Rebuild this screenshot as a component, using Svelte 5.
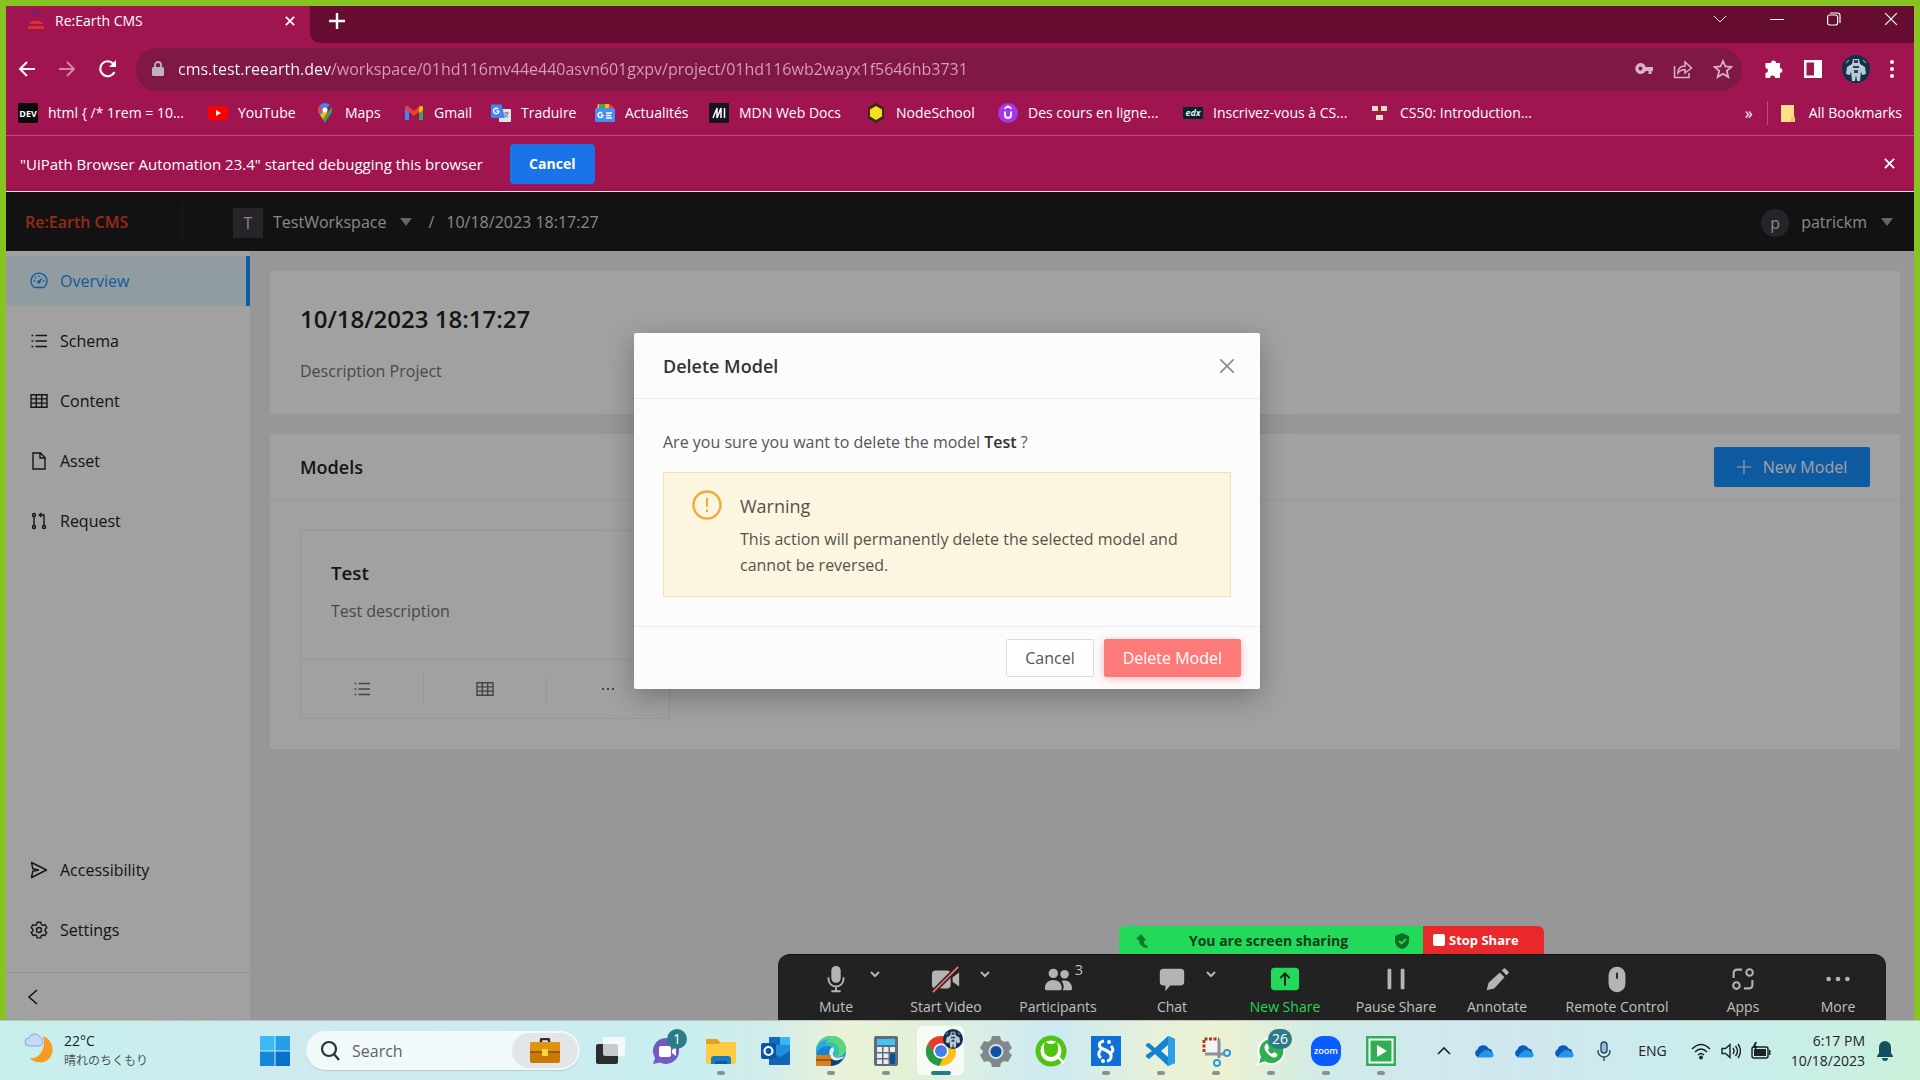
<script>
  const bookmarks = [
    { icon: 'dev', label: 'html { /* 1rem = 10...' },
    { icon: 'youtube', label: 'YouTube' },
    { icon: 'maps', label: 'Maps' },
    { icon: 'gmail', label: 'Gmail' },
    { icon: 'translate', label: 'Traduire' },
    { icon: 'news', label: 'Actualités' },
    { icon: 'mdn', label: 'MDN Web Docs' },
    { icon: 'node', label: 'NodeSchool' },
    { icon: 'udemy', label: 'Des cours en ligne...' },
    { icon: 'edx', label: 'Inscrivez-vous à CS...' },
    { icon: 'cs50', label: 'CS50: Introduction...' }
  ];

  const mainNav = [
    { icon: 'gauge', label: 'Overview', active: true },
    { icon: 'list', label: 'Schema' },
    { icon: 'table', label: 'Content' },
    { icon: 'file', label: 'Asset' },
    { icon: 'request', label: 'Request' }
  ];
  const lowerNav = [
    { icon: 'send', label: 'Accessibility' },
    { icon: 'gear', label: 'Settings' }
  ];

  const meeting = [
    { icon: 'mic', label: 'Mute', menu: true },
    { icon: 'video', label: 'Start Video', menu: true },
    { icon: 'people', label: 'Participants', count: 3 },
    { icon: 'chat', label: 'Chat', menu: true },
    { icon: 'share', label: 'New Share', accent: true },
    { icon: 'pause', label: 'Pause Share' },
    { icon: 'pencil', label: 'Annotate' },
    { icon: 'mouse', label: 'Remote Control' },
    { icon: 'apps', label: 'Apps' },
    { icon: 'more', label: 'More' }
  ];

  const taskApps = [
    { icon: 'taskview', label: 'Task view' },
    { icon: 'teams', label: 'Chat', badge: '1' },
    { icon: 'explorer', label: 'File Explorer', running: true },
    { icon: 'outlook', label: 'Outlook' },
    { icon: 'edge', label: 'Edge', running: true },
    { icon: 'calc', label: 'Calculator', running: true },
    { icon: 'chrome', label: 'Chrome', active: true },
    { icon: 'settings', label: 'Settings' },
    { icon: 'qtest', label: 'Inspector' },
    { icon: 'studio', label: 'Studio', running: true },
    { icon: 'vscode', label: 'Visual Studio Code', running: true },
    { icon: 'snip', label: 'Snipping Tool', running: true },
    { icon: 'whatsapp', label: 'WhatsApp', badge: '26', running: true },
    { icon: 'zoom', label: 'Zoom', running: true },
    { icon: 'assistant', label: 'Assistant', running: true }
  ];

  let url = $state('cms.test.reearth.dev/workspace/01hd116mv44e440asvn601gxpv/project/01hd116wb2wayx1f5646hb3731');
</script>

{#snippet line(name)}
  <svg class="ic" viewBox="0 0 18 18" fill="none" stroke="currentColor" stroke-width="1.4" aria-hidden="true">
    {#if name === 'gauge'}
      <path d="M4.2 15.5A8 8 0 1 1 13.8 15.5Z" stroke-linejoin="round" />
      <path d="M8.6 10.2 12 6.4M9 3.4v1.6M3.6 9h1.6M12.8 9h1.6M5 5.2l1 1" />
      <circle cx="8.8" cy="10" r="1" />
    {:else if name === 'list'}
      <path d="M5.5 3.5H17M5.5 9H17M5.5 14.5H17M1.5 3.5h1.8M1.5 9h1.8M1.5 14.5h1.8" />
    {:else if name === 'table'}
      <path d="M1 2.7h16v12.6H1zM1 6.9h16M1 11.1h16M6.3 2.7v12.6M11.7 2.7v12.6" />
    {:else if name === 'file'}
      <path d="M3 1h7.5L15 5.5V17H3zM10 1v5h5" />
    {:else if name === 'request'}
      <circle cx="4" cy="3" r="1.5" /><circle cx="4" cy="15" r="1.5" /><circle cx="14" cy="15" r="1.5" />
      <path d="M4 4.5v9M14 13.5V3H9.5M11.5 1 9.3 3l2.2 2" />
    {:else if name === 'send'}
      <path d="M1.5 1.5 16.5 9l-15 7.500L2.800 10.200 8.500 9 2.800 7.800Z" stroke-linejoin="round" />
    {:else if name === 'gear'}
      <path d="M7.200 1.200h3.600l.5 2.200 1.500.9 2.200-.7 1.800 3.100-1.700 1.500v1.700l1.700 1.500-1.800 3.100-2.200-.7-1.500.9-.5 2.200H7.200l-.5-2.200-1.500-.9-2.200.7-1.800-3.100 1.700-1.500V8.200L1.200 6.700 3 3.600l2.200.7 1.500-.9Z" stroke-linejoin="round" />
      <circle cx="9" cy="9" r="2.500" />
    {:else if name === 'dots'}
      <path d="M3 9h2M8 9h2M13 9h2" stroke-width="1.8" />
    {/if}
  </svg>
{/snippet}

{#snippet cross(size, width)}
  <svg width={size} height={size} viewBox="0 0 12 12" stroke="currentColor" stroke-width={width} fill="none" aria-hidden="true"><path d="M1 1l10 10M11 1 1 11" /></svg>
{/snippet}

{#snippet favicon(name)}
  <svg class="fav" viewBox="0 0 20 20" aria-hidden="true">
    {#if name === 'dev'}
      <rect width="20" height="20" rx="2" fill="#0a0a0a" /><text x="10" y="14" text-anchor="middle" font-size="9" font-weight="700" fill="#fff">DEV</text>
    {:else if name === 'youtube'}
      <rect y="3" width="20" height="14" rx="4" fill="#f00" /><path d="M8 7v6l5-3z" fill="#fff" />
    {:else if name === 'maps'}
      <path d="M10 0a7 7 0 0 0-7 7c0 2 1 3.500 2 5l10-10A7 7 0 0 0 10 0Z" fill="#4285f4" />
      <path d="M4.500 2.700 8 6 3.600 10A7 7 0 0 1 4.500 2.700Z" fill="#ea4335" />
      <path d="m5 12 4-4 3.500 1.500L8 16.500Z" fill="#fbbc04" />
      <path d="M15.500 2.700A7 7 0 0 1 15 12c-2 3-4 5-5 8-.6-1.300-1.200-2.400-2-3.500L16 5Z" fill="#34a853" />
      <circle cx="10" cy="7" r="2.500" fill="#fff" />
    {:else if name === 'gmail'}
      <path d="M1 5v12h4V8.500Z" fill="#4285f4" /><path d="M19 5v12h-4V8.500Z" fill="#34a853" />
      <path d="M1 5c0-2 2-2.500 3.500-1.500L10 8l5.500-4.500C17 2.500 19 3 19 5l-9 8Z" fill="#ea4335" />
      <path d="m15 4 .5-.5C17 2.500 19 3 19 5v2l-4 3Z" fill="#fbbc04" />
    {:else if name === 'translate'}
      <rect x="8" y="6" width="12" height="13" rx="1" fill="#e4e4e6" /><path d="M0 1.500h10.500L14 15H1.500A1.500 1.500 0 0 1 0 13.500Z" fill="#4285f4" />
      <path d="M8 8H5.500M8 8a2.700 2.700 0 1 1-.8-2" stroke="#fff" stroke-width="1.400" fill="none" />
      <path d="M13 10h5M15.500 9v1M17 10c-.5 2-2 3.500-3 4M14 11c.5 1.500 2 3 3 3.500" stroke="#6b7280" fill="none" />
    {:else if name === 'news'}
      <path d="M3 1h11l3 4H2z" fill="#fbbc04" /><path d="M4 1h6v4H4z" fill="#34a853" /><path d="M14 2l4 1v4h-4z" fill="#ea4335" />
      <rect x="0" y="5" width="20" height="14" rx="1.500" fill="#4a8df6" />
      <path d="M8 12H6M8 12a2.500 2.500 0 1 1-.8-1.800M11 10h6M11 12.500h5M11 15h6" stroke="#fff" stroke-width="1.500" fill="none" />
    {:else if name === 'mdn'}
      <rect width="20" height="20" rx="1" fill="#15141a" /><path d="m4 15 4-10v10l4-10v10M15.500 5v10" stroke="#fff" stroke-width="1.500" fill="none" />
    {:else if name === 'node'}
      <path d="m10 0 8 4.500v11L10 20l-8-4.500v-11Z" fill="#3a2a12" /><path d="m10 3 6 3.500v7L10 17l-6-3.500v-7Z" fill="#f7df1e" />
    {:else if name === 'udemy'}
      <circle cx="10" cy="10" r="10" fill="#a435f0" /><path d="M6.500 5.500 10 3.500l3.500 2M7 8.500V12a3 3 0 0 0 6 0V8.500" stroke="#fff" stroke-width="2" fill="none" />
    {:else if name === 'edx'}
      <rect x="0" y="4" width="20" height="12" rx="1" fill="#02262b" /><text x="10" y="13" text-anchor="middle" font-size="9" font-weight="700" font-style="italic" fill="#e8f0ef">edx</text>
    {:else if name === 'cs50'}
      <path d="M5 6h10M10 6v9" stroke="#8b2a1f" stroke-width="3" />
      <path d="M2 3h6v5H2zM11 3h6v5h-6zM6 12h7v5H6z" fill="#e9dccb" />
    {/if}
  </svg>
{/snippet}

{#snippet meet(name)}
  <svg class="meet" viewBox="0 0 32 32" fill="#b4b4b4" stroke="none" aria-hidden="true">
    {#if name === 'mic'}
      <rect x="11" y="2" width="10" height="18" rx="5" /><path d="M8 14v2a8 8 0 0 0 16 0v-2M16 24v5M11 29h10" fill="none" stroke="#b4b4b4" stroke-width="2" />
    {:else if name === 'video'}
      <rect x="1" y="7" width="20" height="19" rx="4" /><path d="m23 14 7-5v15l-7-5z" /><path d="M2 30 29 3" stroke="#222" stroke-width="5" /><path d="M2 30 29 3" stroke="#ee6a6a" stroke-width="2" />
    {:else if name === 'people'}
      <circle cx="11" cy="10" r="5" /><path d="M2 26c0-5 3-9 9-9s9 4 9 9q0 2-2 2H4q-2 0-2-2Z" /><circle cx="23" cy="11" r="4.500" /><path d="M20 18c6-2 11 2 11 8q0 2-2 2h-8c2-3 1-7-1-10Z" />
    {:else if name === 'chat'}
      <path d="M7 5h18q4 0 4 4v10q0 4-4 4H14l-5 6v-6H7q-4 0-4-4V9q0-4 4-4Z" />
    {:else if name === 'share'}
      <rect x="1" y="4" width="30" height="24" rx="4" fill="#23d959" /><path d="M16 23V10M11 15l5-5 5 5" stroke="#1a1a1a" stroke-width="2" fill="none" />
    {:else if name === 'pause'}
      <rect x="7" y="5" width="4" height="22" rx="1" /><rect x="21" y="5" width="4" height="22" rx="1" />
    {:else if name === 'pencil'}
      <path d="M5 28l2-8L19 9l5 5-11 12Z" /><path d="m21 7 2-2q1-1 2 0l3 3q1 1 0 2l-2 2Z" />
    {:else if name === 'mouse'}
      <rect x="7" y="3" width="18" height="27" rx="9" /><rect x="15" y="9" width="2" height="7" rx="1" fill="#222" />
    {:else if name === 'apps'}
      <g fill="none" stroke="#b4b4b4" stroke-width="2.200"><circle cx="23" cy="9" r="3.500" /><circle cx="9" cy="23" r="3.500" /><path d="M15 6H10q-4 0-4 4v5M17 26h5q4 0 4-4v-5" /></g>
    {:else if name === 'more'}
      <circle cx="6" cy="16" r="2.500" /><circle cx="16" cy="16" r="2.500" /><circle cx="26" cy="16" r="2.500" />
    {/if}
  </svg>
{/snippet}

{#snippet app(name)}
  <svg class="app-ic" viewBox="0 0 32 32" aria-hidden="true">
    {#if name === 'taskview'}
      <rect x="1" y="9" width="22" height="20" rx="2" fill="#2b2c30" /><rect x="8" y="2" width="22" height="19" rx="2" fill="#fff" fill-opacity=".75" />
    {:else if name === 'teams'}
      <path d="M16 3a13 13 0 1 1-6 24.500L3 29l2-6A13 13 0 0 1 16 3Z" fill="#7559c0" /><rect x="9" y="11" width="12" height="11" rx="2" fill="#fff" /><path d="m22 15 4-3v9l-4-3z" fill="#fff" />
    {:else if name === 'explorer'}
      <path d="M1 4h11l3 3h15v10H1z" fill="#e0a21b" /><path d="M1 9h12l3-2h15v20q0 2-2 2H3q-2 0-2-2z" fill="#fccb3f" /><path d="M6 29v-5q0-3 3-3h14q3 0 3 3v5z" fill="#1b78c9" /><path d="M10 26h12v3H10z" fill="#0f5aa0" />
    {:else if name === 'outlook'}
      <rect x="9" y="2" width="21" height="28" rx="1" fill="#1f8de0" /><path d="M20 2h10v8H20z" fill="#35b8f1" /><path d="M9 2h11v8H9z" fill="#0f6cbd" /><path d="M9 16l11 6 10-6v12q0 2-2 2H9z" fill="#1066b5" /><rect x="1" y="8" width="15" height="16" rx="2" fill="#0a55a5" /><circle cx="8.500" cy="16" r="4" fill="none" stroke="#fff" stroke-width="2.200" />
    {:else if name === 'edge'}
      <circle cx="16" cy="16" r="15" fill="#1683d8" />
      <path d="M1 15C2 6 9 1 16 1c9 0 15 6 15 13 0 5-4 8-9 8-4 0-5-2-3-4 1-4-2-7-6-7-6 0-10 3-12 8Z" fill="#35c1b0" />
      <path d="M16 1c9 0 15 6 15 13 0 5-4 8-9 8 5-6 1-15-8-15-4 0-8 1-11 3C6 4 11 1 16 1Z" fill="#5bd67a" />
      <path d="M13 11c-6 0-10 3-12 7 0-10 8-15 15-13-5 0-7 2-3 6Z" fill="#2aa7e6" />
      <path d="M17 12c3 2 2 4 1 6-1 5 6 6 11 3-1 3-3 5-6 5-7 0-12-8-6-14Z" fill="#e6f3ec" />
      <path d="M14 22c4 5 10 4 14 1-3 6-8 8-14 8Z" fill="#123f73" />
      <rect x="1" y="20" width="15" height="11" rx="1" fill="#d9811e" /><path d="M1 25h15" stroke="#8a4c10" stroke-width="1.500" />
    {:else if name === 'calc'}
      <rect x="4" y="1" width="24" height="30" rx="2" fill="#5d6d7c" /><rect x="7" y="4" width="18" height="6" fill="#42c4ee" /><path d="M7 12h5v5H7zM13.500 12h5v5h-5zM20 12h5v5h-5zM7 18.500h5v4.500H7zM13.500 18.500h5v4.500h-5zM7 24.500h5V29H7zM13.500 24.500h5V29h-5z" fill="#e9edf0" /><path d="M20 18.500h5V29h-5z" fill="#0b4f96" />
    {:else if name === 'chrome'}
      <circle cx="16" cy="16" r="15" fill="#fbc116" /><path d="M3 8.500A15 15 0 0 1 29 8.500H16a7.500 7.500 0 0 0-6.500 11.200Z" fill="#e33b2e" /><path d="M3 8.500 9.500 19.700A7.500 7.500 0 0 0 18 23.200L14 31A15 15 0 0 1 3 8.500Z" fill="#229a48" /><circle cx="16" cy="16" r="7.500" fill="#fff" /><circle cx="16" cy="16" r="6" fill="#3f7fee" />
    {:else if name === 'settings'}
      <path d="M12 1h8l1 4 3 2 4-1 4 7-3 3v1l3 3-4 7-4-1-3 2-1 4h-8l-1-4-3-2-4 1-4-7 3-3v-1l-3-3 4-7 4 1 3-2Z" fill="#80878d" /><circle cx="16" cy="16.500" r="7.500" fill="#d7dde1" /><circle cx="16" cy="16.500" r="5.500" fill="#0d52a3" />
    {:else if name === 'qtest'}
      <circle cx="16" cy="16" r="15.500" fill="#4fc413" /><circle cx="16" cy="16" r="10.500" fill="#fff" /><path d="m23 22 6 6" stroke="#fff" stroke-width="2.500" /><path d="M9 15c0-4 0-8 2-8l3 2h4l3-2c2 0 2 4 2 8a7 7 0 0 1-14 0Z" fill="#4fc413" />
    {:else if name === 'studio'}
      <rect x="1" y="1" width="30" height="30" fill="#0d6fd8" /><path d="M14 6c-6 1-6 6-1 8s9 4 8 8c0 2-2 4-4 4M21 11c3 3 2 5 0 7M11 15c-3 2-3 6 0 8" stroke="#fff" stroke-width="3" fill="none" /><circle cx="19" cy="7" r="2" fill="#fff" /><circle cx="13" cy="26" r="2" fill="#fff" />
    {:else if name === 'vscode'}
      <path d="m23 1 7 3v24l-7 3L10 19l-6 5-3-2v-2l6-4-6-5v-2l3-1 6 5Zm0 9-7 6 7 6Z" fill="#1283cf" fill-rule="evenodd" /><path d="m23 1 7 3v24l-7 3Z" fill="#2b9de9" />
    {:else if name === 'snip'}
      <rect x="5" y="5" width="12" height="12" fill="#f3f4f6" /><path d="M4 17V4h15" stroke="#b8371c" stroke-width="3" stroke-dasharray="3 1.500" fill="none" /><path d="M19 4v19M5 19h20" stroke="#8b9196" stroke-width="3" /><circle cx="27" cy="18" r="3" fill="none" stroke="#2d9bd8" stroke-width="2" /><circle cx="17" cy="28" r="3" fill="none" stroke="#2d9bd8" stroke-width="2" />
    {:else if name === 'whatsapp'}
      <path d="M16 2a14 14 0 1 1-7 26l-8 3 3-8A14 14 0 0 1 16 2Z" fill="#fff" /><path d="M16 4a12 12 0 1 1-6 22.200L4 28l2-6A12 12 0 0 1 16 4Z" fill="#2fae50" /><path d="M11 9c-3 3-1 7 2 10s7 5 9 2c1-2 0-2-3-4l-2 2c-2-1-3-2-4-4l1-2c-1-3-1-5-3-4Z" fill="#fff" />
    {:else if name === 'zoom'}
      <rect x="1" y="1" width="30" height="30" rx="12" fill="#0b5cff" /><text x="16" y="19" text-anchor="middle" font-size="9" font-weight="600" fill="#fff">zoom</text>
    {:else if name === 'assistant'}
      <rect x="1" y="1" width="30" height="30" fill="#2fae55" /><rect x="4.500" y="4.500" width="23" height="23" fill="none" stroke="#fff" stroke-width="2" /><path d="m12 10 10 6-10 6z" fill="#fff" />
    {/if}
  </svg>
{/snippet}

{#snippet avatar(cls)}
  <svg class={cls} viewBox="0 0 28 28" aria-hidden="true">
    <circle cx="14" cy="14" r="14" fill="#12304a" />
    <path d="M11 4h6l1 5 5 3 1 7-4 1-1-4-1 10h-3l-1-6-1 6h-3L9 16l-1 4-4-1 1-7 5-3Z" fill="#b9cbd6" />
    <path d="M12 5h4v3h-4zM11 11h6v2h-6zM12 15h4v3h-4z" fill="#26455e" /><path d="M4 8l3-3M24 8l-3-3" stroke="#5d8fae" stroke-width="1.500" />
  </svg>
{/snippet}

<div class="screen">
  <div class="window">
    <header class="tabs">
      <div class="tab">
        <svg class="tab-fav" viewBox="0 0 20 20" aria-hidden="true"><path d="M6 10h7l5 3H3zM2 15h16v3H2z" fill="#d9322e" /><path d="M8 0h4v4H8z" fill="#5b2a86" /></svg>
        <span>Re:Earth CMS</span>
        <button class="bare" aria-label="Close tab">{@render cross(10, 2)}</button>
      </div>
      <div class="strip">
        <button class="bare" aria-label="New tab"><svg width="16" height="16" viewBox="0 0 16 16" stroke="currentColor" stroke-width="2.400"><path d="M8 0v16M0 8h16" /></svg></button>
        <div class="win-ctl">
          <button class="bare" aria-label="Search tabs"><svg width="14" height="14" viewBox="0 0 14 14" fill="none" stroke="currentColor"><path d="m1 4 6 6 6-6" /></svg></button>
          <button class="bare" aria-label="Minimize"><svg width="14" height="14" viewBox="0 0 14 14" stroke="currentColor"><path d="M0 7.500h14" /></svg></button>
          <button class="bare" aria-label="Restore"><svg width="14" height="14" viewBox="0 0 14 14" fill="none" stroke="currentColor" stroke-width="1.200"><rect x=".6" y="3" width="10" height="10" rx="2" /><path d="M3 1h7.500Q13 1 13 3.500V11" /></svg></button>
          <button class="bare" aria-label="Close window">{@render cross(14, 1)}</button>
        </div>
      </div>
    </header>

    <div class="toolbar">
      <button class="bare" aria-label="Back"><svg width="18" height="18" viewBox="0 0 18 18" fill="none" stroke="currentColor" stroke-width="2"><path d="M17 9H2M9 2 2 9l7 7" /></svg></button>
      <button class="bare dim" aria-label="Forward"><svg width="18" height="18" viewBox="0 0 18 18" fill="none" stroke="currentColor" stroke-width="2"><path d="M1 9h15M9 2l7 7-7 7" /></svg></button>
      <button class="bare" aria-label="Reload"><svg width="20" height="20" viewBox="0 0 20 20" fill="none" stroke="currentColor" stroke-width="2.200"><path d="M16.500 13A7.500 7.500 0 1 1 15.300 4.700L17 6.500" /><path d="M18 1v7h-7z" fill="currentColor" stroke="none" /></svg></button>
      <div class="omnibox">
        <svg width="12" height="16" viewBox="0 0 12 16" aria-hidden="true"><rect y="6" width="12" height="9" rx="1.500" fill="#bfb4ba" /><path d="M3 6V4a3 3 0 0 1 6 0v2" stroke="#bfb4ba" stroke-width="1.800" fill="none" /></svg>
        <input aria-label="Address" bind:value={url} spellcheck="false" />
        <button class="bare" aria-label="Passwords"><svg width="18" height="12" viewBox="0 0 18 12" fill="currentColor"><path d="M5.500 0a5.500 5.500 0 0 1 5.200 4H18v4h-1.500v3h-3V8h-2.800A5.500 5.500 0 1 1 5.500 0Zm0 3.500a2 2 0 1 0 0 4 2 2 0 0 0 0-4Z" fill-rule="evenodd" /></svg></button>
        <button class="bare" aria-label="Share"><svg width="20" height="20" viewBox="0 0 20 20" fill="none" stroke="currentColor" stroke-width="1.500"><path d="M1.500 7v11.500H16V14" /><path d="M5 14c0-5 3-7 7-7V3l6.500 6-6.500 5v-3.500c-3 0-5 1-7 3.500Z" /></svg></button>
        <button class="bare" aria-label="Bookmark"><svg width="20" height="20" viewBox="0 0 20 20" fill="none" stroke="currentColor" stroke-width="1.800"><path d="m10 2 2.400 5.500 6 .5-4.600 3.900L15.300 18 10 14.700 4.700 18l1.500-6.100L1.600 8l6-.5Z" /></svg></button>
      </div>
      <div class="ext">
        <button class="bare" aria-label="Extensions"><svg width="20" height="20" viewBox="0 0 20 20" fill="currentColor"><path d="M7 4a2.500 2.500 0 0 1 5 0h4v5a2.500 2.500 0 0 1 0 5v5h-5a2.500 2.500 0 0 0-5 0H1.500v-5a2.500 2.500 0 0 0 0-5V4Z" /></svg></button>
        <button class="bare" aria-label="Side panel"><svg width="18" height="18" viewBox="0 0 18 18" fill="currentColor"><path d="M0 0h18v18H0zM2.500 2.500v13H10v-13z" fill-rule="evenodd" /></svg></button>
        <button class="bare" aria-label="Profile">{@render avatar('pic')}</button>
        <button class="bare" aria-label="Menu"><svg width="4" height="18" viewBox="0 0 4 18" fill="currentColor"><circle cx="2" cy="2" r="2" /><circle cx="2" cy="9" r="2" /><circle cx="2" cy="16" r="2" /></svg></button>
      </div>
    </div>

    <nav class="bookmarks" aria-label="Bookmarks">
      <div class="marks">
        {#each bookmarks as b}
          <a href="#{b.icon}">{@render favicon(b.icon)}<span>{b.label}</span></a>
        {/each}
      </div>
      <button class="bare more">»</button>
      <a class="all" href="#all"><svg width="16" height="18" viewBox="0 0 16 18" aria-hidden="true"><path d="M1 1h13v11l1 2v4H1z" fill="#ffe08a" /><path d="M11 18v-5h3v5z" fill="#f2c14e" /></svg><span>All Bookmarks</span></a>
    </nav>

    <div class="infobar">
      <span>"UiPath Browser Automation 23.4" started debugging this browser</span>
      <button class="stop">Cancel</button>
      <button class="bare end" aria-label="Dismiss">{@render cross(11, 2)}</button>
    </div>

    <div class="page">
      <header class="top">
        <a class="brand" href="#home">Re:Earth CMS</a>
        <span class="sq">T</span>
        <button class="bare crumb">TestWorkspace <i class="tri"></i></button>
        <span class="slash">/</span>
        <span>10/18/2023 18:17:27</span>
        <button class="bare user"><span class="round">p</span>patrickm <i class="tri"></i></button>
      </header>

      <div class="body">
        <aside>
          <nav>
            {#each mainNav as n}
              <a href="#{n.icon}" class:active={n.active}>{@render line(n.icon)}{n.label}</a>
            {/each}
          </nav>
          <nav class="lower">
            {#each lowerNav as n}
              <a href="#{n.icon}">{@render line(n.icon)}{n.label}</a>
            {/each}
          </nav>
          <button class="bare fold" aria-label="Collapse sidebar"><svg width="12" height="16" viewBox="0 0 12 16" fill="none" stroke="currentColor" stroke-width="1.600"><path d="M10 1 2 8l8 7" /></svg></button>
        </aside>

        <main>
          <section class="intro">
            <h1>10/18/2023 18:17:27</h1>
            <p>Description Project</p>
          </section>
          <section class="models">
            <div class="head">
              <h2>Models</h2>
              <button class="new"><svg width="14" height="14" viewBox="0 0 14 14" stroke="currentColor" stroke-width="1.200"><path d="M7 0v14M0 7h14" /></svg>New Model</button>
            </div>
            <div class="list">
              <article>
                <div class="info">
                  <h3>Test</h3>
                  <p>Test description</p>
                </div>
                <div class="acts">
                  <button class="bare" aria-label="Schema">{@render line('list')}</button>
                  <button class="bare" aria-label="Content">{@render line('table')}</button>
                  <button class="bare" aria-label="More">{@render line('dots')}</button>
                </div>
              </article>
            </div>
          </section>
        </main>
      </div>

      <div class="mask">
        <div class="dialog" role="dialog" aria-modal="true" aria-labelledby="dlg-title">
          <div class="dlg-head">
            <h2 id="dlg-title">Delete Model</h2>
            <button class="bare" aria-label="Close">{@render cross(16, 1.2)}</button>
          </div>
          <div class="dlg-body">
            <p>Are you sure you want to delete the model <strong>Test</strong> ?</p>
            <div class="alert" role="alert">
              <svg width="30" height="30" viewBox="0 0 30 30" fill="none" stroke="#f2a93b" stroke-width="2.400" aria-hidden="true"><circle cx="15" cy="15" r="13.500" /><path d="M15 8v9M15 19.500v2.500" stroke-width="2" /></svg>
              <div>
                <h3>Warning</h3>
                <p>This action will permanently delete the selected model and cannot be reversed.</p>
              </div>
            </div>
          </div>
          <div class="dlg-foot">
            <button class="btn">Cancel</button>
            <button class="btn danger">Delete Model</button>
          </div>
        </div>
      </div>
    </div>

    <div class="meeting">
      <div class="sharing">
        <div class="status">
          <svg width="14" height="16" viewBox="0 0 14 16" aria-hidden="true"><path d="M6 1 1 6l3 1c0 4 2 7 8 8l1-2c-4-1-4-3-4-5l2-1Z" fill="#0b7a2c" /></svg>
          <span>You are screen sharing</span>
          <svg width="14" height="16" viewBox="0 0 14 16" aria-hidden="true"><path d="m7 0 7 3v5c0 4-3 7-7 8-4-1-7-4-7-8V3Z" fill="#0b6e28" /><path d="m4 8 2.500 2.500L11 6" stroke="#23d959" stroke-width="1.800" fill="none" /></svg>
        </div>
        <button class="stop-share"><i></i>Stop Share</button>
      </div>
      <div class="meet-bar">
        {#each meeting as m}
          <button class="bare item" class:accent={m.accent}>
            <span class="pic-row">
              {@render meet(m.icon)}
              {#if m.menu}<svg class="caret" viewBox="0 0 10 8" fill="none" stroke="#b4b4b4" stroke-width="2"><path d="m1 1 4 4 4-4" /></svg>{/if}
              {#if m.count}<sup>{m.count}</sup>{/if}
            </span>
            <span>{m.label}</span>
          </button>
        {/each}
      </div>
    </div>
  </div>

  <footer class="taskbar">
    <div class="weather">
      <svg width="30" height="36" viewBox="0 0 30 36" aria-hidden="true"><path d="M19 5c8 3 12 12 8 20-4 7-14 9-22 2 9 2 18-8 14-22Z" fill="#f59a23" /><path d="M5 15a4 4 0 0 1 0-8 6 6 0 0 1 11-1 5 5 0 0 1 0 9Z" fill="#c9d8f6" stroke="#8aa4df" /></svg>
      <div><span>22°C</span><span>晴れのちくもり</span></div>
    </div>
    <div class="apps">
      <button class="bare slot" aria-label="Start"><svg class="app-ic" viewBox="0 0 32 32"><path d="M1 1h14.500v14.500H1z" fill="#3cb8f5" /><path d="M16.500 1H31v14.500H16.500z" fill="#259fe8" /><path d="M1 16.500h14.500V31H1z" fill="#1487dc" /><path d="M16.500 16.500H31V31H16.500z" fill="#0871cc" /></svg></button>
      <label class="search">
        <svg width="20" height="22" viewBox="0 0 20 22" fill="none" stroke="#2b3035" stroke-width="2.200" aria-hidden="true"><circle cx="9" cy="9" r="7" /><path d="m14 14 5 6" /></svg>
        <input type="search" placeholder="Search" aria-label="Search" />
        <span class="bag"><svg width="30" height="26" viewBox="0 0 30 26" aria-hidden="true"><path d="M11 4V2q0-1 1-1h6q1 0 1 1v2" stroke="#3b2a1a" stroke-width="2.500" fill="none" /><rect y="4" width="30" height="21" rx="2" fill="#c9780c" /><path d="M0 6q0-2 2-2h26q2 0 2 2v8H0z" fill="#e0930f" /><path d="M0 14h30" stroke="#8a4c08" stroke-width="1.500" /><rect x="12" y="11" width="6" height="7" rx="1" fill="#fcd53a" /></svg></span>
      </label>
      {#each taskApps as t}
        <button class="bare slot" class:on={t.active} class:running={t.running} aria-label={t.label}>
          {@render app(t.icon)}
          {#if t.badge}<b class="badge">{t.badge}</b>{/if}
          {#if t.active}{@render avatar('mini')}{/if}
        </button>
      {/each}
    </div>
    <div class="tray">
      <button class="bare" aria-label="Hidden icons"><svg width="14" height="14" viewBox="0 0 14 14" fill="none" stroke="currentColor" stroke-width="1.600"><path d="m1 10 6-6 6 6" /></svg></button>
      {#each [1, 2, 3] as n}
        <button class="bare" aria-label="OneDrive {n}"><svg width="20" height="14" viewBox="0 0 20 14"><path d="M4 13a4 4 0 0 1-.5-7.500 6 6 0 0 1 11-1A4.500 4.500 0 0 1 16 13Z" fill="#0a5cba" /><path d="M3 13.500 8 8q5-4 9 0c3 1 4 5 0 5.500Z" fill="#2696ea" /></svg></button>
      {/each}
      <button class="bare" aria-label="Microphone"><svg width="14" height="20" viewBox="0 0 14 20" fill="none" stroke="#33475a" stroke-width="1.400"><rect x="4" y="1" width="6" height="11" rx="3" fill="#8ec0e0" /><path d="M1 9v1a6 6 0 0 0 12 0V9M7 16v4" /></svg></button>
      <span class="lang">ENG</span>
      <div class="sys">
        <svg width="20" height="18" viewBox="0 0 20 18" fill="none" stroke="currentColor" stroke-width="1.500"><path d="M1 7q9-9 18 0M4 10q6-6 12 0M7 13q3-3 6 0" /><circle cx="10" cy="15.500" r="1.200" fill="currentColor" /></svg>
        <svg width="20" height="18" viewBox="0 0 20 18" fill="none" stroke="currentColor" stroke-width="1.400"><path d="M1 6.500h3.500L9 2.500v13l-4.500-4H1zM12 6q2 3 0 6M14.500 4q4 5 0 10M17 2q5 7 0 14" /></svg>
        <svg width="20" height="18" viewBox="0 0 20 18" fill="none" stroke="currentColor" stroke-width="1.500"><rect x="1" y="5" width="16" height="11" rx="2" /><path d="M3 7h12v7H3zM18 8h1.500v5H18z" fill="currentColor" stroke="none" /><path d="M4 0 1 6h3L3 10l4-6H4.500L6 0Z" fill="currentColor" stroke="none" /></svg>
      </div>
      <div class="clock"><span>6:17 PM</span><span>10/18/2023</span></div>
      <button class="bare" aria-label="Notifications"><svg width="16" height="20" viewBox="0 0 16 20" fill="#16505f"><path d="M8 0a6 6 0 0 1 6 6v6l2 3v1H0v-1l2-3V6a6 6 0 0 1 6-6ZM5 17h6a3 3 0 0 1-6 0Z" /></svg></button>
    </div>
  </footer>
</div>

<style>
  :global(body) { margin: 0; }
  .screen, .screen :global(*) { box-sizing: border-box; }
  .screen {
    min-height: 100vh; display: flex; flex-direction: column;
    font-family: "Open Sans", "Noto Sans", "Noto Sans CJK JP", sans-serif; font-size: 16px; line-height: 24px; color: #222;
  }
  h1, h2, h3, p { margin: 0; font-weight: 400; }
  a { color: inherit; text-decoration: none; }
  svg { display: block; flex: none; }
  button, input { font: inherit; }
  .bare { border: 0; padding: 0; background: none; color: inherit; display: flex; align-items: center; justify-content: center; }

  .window { flex: 1; display: flex; flex-direction: column; border: 6px solid #86c323; border-bottom: 0; background: #a0144f; color: #fff; position: relative; }

  /* Browser chrome */
  .tabs { display: flex; height: 37px; font-size: 14px; }
  .tab { width: 304px; display: flex; align-items: center; gap: 9px; padding: 0 15px 8px 20px; }
  .tab span { flex: 1; }
  .tab-fav { width: 20px; height: 20px; }
  .strip { flex: 1; display: flex; align-items: center; justify-content: space-between; padding: 0 16px 8px 19px; background: #650c30; border-bottom-left-radius: 10px; }
  .win-ctl { display: flex; gap: 43px; padding-bottom: 4px; }
  .toolbar { display: flex; align-items: center; height: 52px; padding: 0 20px 0 12px; gap: 22px; }
  .dim { opacity: .5; }
  .omnibox { flex: 1; display: flex; align-items: center; gap: 20px; height: 43px; margin-left: -4px; padding: 0 9px 0 16px; border-radius: 22px; background: #7f1844; color: #d9b3c4; }
  .omnibox input {
    flex: 1; min-width: 0; border: 0; padding: 0; margin-left: -6px; outline: 0; font-size: 16px; height: 28px;
    color: transparent; background: linear-gradient(to right, #fff 153px, #dc9fbb 153px); -webkit-background-clip: text; background-clip: text;
  }
  .ext { display: flex; align-items: center; gap: 20px; }
  .ext :global(.pic) { width: 28px; height: 28px; }
  .bookmarks { display: flex; align-items: center; height: 41px; padding: 0 12px 4px; font-size: 14px; border-bottom: 1px solid #c04a7a; }
  .marks { flex: 1; display: grid; grid-template-columns: 190px 107px 89px 87px 104px 114px 157px 132px 185px 187px 165px; }
  .marks a, .all { display: flex; align-items: center; gap: 10px; white-space: nowrap; }
  .fav { width: 20px; height: 20px; }
  .more { font-size: 16px; }
  .all { margin-left: 14px; padding-left: 12px; border-left: 1px solid #c04a7a; }
  .all svg { margin-right: 3px; }
  .infobar { display: flex; align-items: center; gap: 27px; height: 56px; padding: 0 19px 0 14px; border-bottom: 1px solid #f8dbe7; font-size: 15px; }
  .stop { width: 85px; height: 40px; border: 0; border-radius: 4px; background: #1a73e8; color: #fff; font-size: 14px; font-weight: 700; }
  .end { margin-left: auto; }

  /* CMS page */
  .page { flex: 1; display: flex; flex-direction: column; position: relative; background: #f0f0f0; color: #222; }
  .top { display: flex; align-items: center; height: 59px; padding: 0 21px 0 19px; background: #1e1e1e; color: #d8d8d8; }
  .brand { width: 158px; line-height: 40px; border-right: 1px solid #2c2c2c; color: #f0402a; font-weight: 600; }
  .sq, .round { display: flex; align-items: center; justify-content: center; width: 30px; height: 30px; margin-top: 3px; background: #3e3a42; }
  .sq { margin-left: 50px; }
  .round { border-radius: 50%; width: 28px; height: 28px; margin-right: 12px; }
  .crumb { margin-left: 10px; gap: 14px; }
  .user { margin-left: auto; }
  .tri { border: 6px solid transparent; border-top: 8px solid #a0a0a0; border-bottom: 0; }
  .user .tri { margin-left: 14px; }
  .slash { margin: 0 12px 0 16px; }
  .body { flex: 1; display: flex; }
  aside { width: 244px; display: flex; flex-direction: column; background: #fff; }
  aside nav { display: flex; flex-direction: column; gap: 10px; padding-top: 5px; }
  aside nav a { display: flex; align-items: center; gap: 12px; height: 50px; padding: 0 0 0 24px; }
  aside nav a.active { color: #1890ff; background: #e6f7ff; border-right: 4px solid #1890ff; }
  .lower { margin-top: auto; margin-bottom: 17px; }
  .ic { width: 18px; height: 18px; }
  .fold { height: 48px; padding-left: 21px; border-top: 1px solid #e9e9e9; justify-content: flex-start; }
  main { flex: 1; display: flex; flex-direction: column; gap: 20px; padding: 20px 14px 20px 20px; }
  section { background: #fff; }
  .intro { padding: 30px 30px 31px; display: flex; flex-direction: column; gap: 22px; }
  h1 { font-size: 24px; line-height: 36px; font-weight: 600; }
  .intro p, .info p { color: #757575; }
  .models .head { display: flex; align-items: center; justify-content: space-between; height: 66px; padding: 0 30px; border-bottom: 1px solid #f2f2f2; }
  .head h2 { font-size: 18px; font-weight: 600; }
  .new { display: flex; align-items: center; justify-content: center; gap: 12px; width: 156px; height: 40px; border: 0; border-radius: 2px; background: #1890ff; color: #fff; }
  .list { padding: 30px; }
  article { width: 370px; border: 1px solid #f0f0f0; }
  .info { height: 128px; padding: 30px; display: flex; flex-direction: column; gap: 14px; }
  .info h3 { font-weight: 600; }
  .acts { display: flex; align-items: center; height: 59px; border-top: 1px solid #f0f0f0; color: #6c6c6c; }
  .acts button { flex: 1; height: 30px; }
  .acts button + button { border-left: 1px solid #f0f0f0; }

  /* Modal */
  .mask { position: absolute; inset: 0; display: flex; align-items: flex-start; justify-content: center; padding: 141px 26px 0 0; background: rgba(0, 0, 0, .37); }
  .dialog { width: 626px; border-radius: 2px; background: #fcfcfd; color: #555; box-shadow: 0 8px 28px rgba(0, 0, 0, .28); }
  .dlg-head { display: flex; align-items: center; justify-content: space-between; height: 66px; padding: 0 25px 0 29px; border-bottom: 1px solid #ededf0; }
  .dlg-head h2 { font-size: 18px; font-weight: 600; color: #333; }
  .dlg-head button { color: #8a8a8a; }
  .dlg-body { padding: 31px 29px 29px; }
  .dlg-body strong { color: #333; font-weight: 600; }
  .alert { display: flex; gap: 18px; margin-top: 18px; padding: 17px 28px 18px; border: 1px solid #f7e2a4; background: #fcf6e1; color: #55524a; }
  .alert h3 { font-size: 18px; line-height: 32px; }
  .alert p { line-height: 26px; margin-top: 4px; }
  .dlg-foot { display: flex; justify-content: flex-end; gap: 10px; padding: 12px 19px; border-top: 1px solid #ededf0; }
  .btn { height: 38px; padding: 0 18px; border: 1px solid #dcdcdc; border-radius: 2px; background: #fff; color: #555; }
  .danger { border-color: #fc7a78; background: #fc7a78; color: #fff; box-shadow: 0 2px 8px rgba(252, 122, 120, .5); }

  /* Meeting controls float over the page */
  .meeting { position: absolute; right: 28px; bottom: 0; width: 1108px; }
  .sharing { display: flex; margin-left: 341px; height: 28px; font-size: 14px; font-weight: 700; }
  .status { width: 304px; display: flex; align-items: center; justify-content: space-between; padding: 2px 14px 0 16px; border-radius: 6px 0 0 0; background: #23d959; color: #0c3d19; }
  .status span { padding-right: 7px; }
  .stop-share { width: 121px; display: flex; align-items: center; gap: 4px; padding: 0 10px; border: 0; border-radius: 0 6px 0 0; background: #e8282a; color: #fff; font-size: 13px; font-weight: 700; }
  .stop-share i { width: 12px; height: 12px; border-radius: 2px; background: #fff; }
  .meet-bar { display: grid; grid-template-columns: 116fr 104fr 120fr 108fr 118fr 104fr 98fr 142fr 110fr 80fr; height: 66px; padding: 5px 8px 0 0; border-radius: 12px 12px 0 0; background: #222; border-top: 1px solid #111; color: #c0c0c0; font-size: 14px; line-height: 20px; }
  .item { flex-direction: column; gap: 3px; white-space: nowrap; }
  .accent { color: #23d959; }
  .pic-row { position: relative; display: flex; }
  .meet { width: 30px; height: 30px; }
  .caret { position: absolute; left: 49px; top: 7px; width: 10px; height: 8px; }
  sup { position: absolute; left: 32px; top: -2px; font-size: 14px; line-height: 16px; }

  /* Taskbar */
  .taskbar { display: flex; align-items: center; justify-content: space-between; height: 60px; padding: 0 25px 0 24px; border-top: 1px solid #b9c4c4; font-size: 14px; line-height: 20px; color: #1c2327;
    background: linear-gradient(to right, #c8efec, #cfe9f0 20%, #c9eef0 36%, #d2ecea 40%, #eaf2d8 44%, #e4f1d6 47%, #cdeaf2 55%, #e6f0da 60%, #ecf1d2 64%, #cfebe8 69%, #d0e7f0 78%, #c8eee9 92%, #cdf0da); }
  .weather { display: flex; gap: 10px; width: 223px; }
  .weather div { display: flex; flex-direction: column; }
  .weather div span:last-child { color: #4b565a; font-size: 12px; }
  .apps { display: flex; align-items: center; margin-right: auto; height: 100%; }
  .slot { position: relative; width: 55px; height: 100%; }
  .app-ic { width: 32px; height: 32px; }
  .search { display: flex; align-items: center; width: 274px; height: 39px; margin: 0 3px 0 4px; padding: 0 2px 0 14px; border-radius: 20px; background: #f1f9fb; box-shadow: 0 1px 1px #b8cccf; }
  .search input { flex: 1; min-width: 0; border: 0; outline: 0; background: none; padding: 0 0 0 12px; font-size: 16px; }
  .search input::placeholder { color: #5b6367; opacity: 1; }
  .bag { display: flex; align-items: center; justify-content: center; width: 66px; height: 35px; border-radius: 18px; background: #e2e6e8; }
  .badge { position: absolute; right: 6px; top: 8px; min-width: 20px; height: 20px; padding: 0 4px; border-radius: 10px; background: #2a7c86; color: #fff; font-size: 14px; line-height: 20px; font-weight: 400; text-align: center; }
  .running::after, .on::after { content: ""; position: absolute; left: 50%; margin-left: -4px; bottom: 5px; width: 8px; height: 4px; border-radius: 2px; background: #8a9092; }
  .on::after { width: 20px; margin-left: -10px; background: #2a7c86; }
  .on::before { content: ""; position: absolute; inset: 5px 4px; border-radius: 5px; background: rgba(255, 255, 255, .7); }
  .on .app-ic { position: relative; }
  .slot :global(.mini) { position: absolute; right: 5px; top: 8px; width: 20px; height: 20px; }
  .tray { display: flex; align-items: center; gap: 20px; }
  .tray button { width: 20px; }
  .lang { margin: 0 4px; }
  .sys { display: flex; gap: 10px; }
  .clock { display: flex; flex-direction: column; text-align: right; }
  .tray > button:last-child { margin-left: -10px; }
</style>
